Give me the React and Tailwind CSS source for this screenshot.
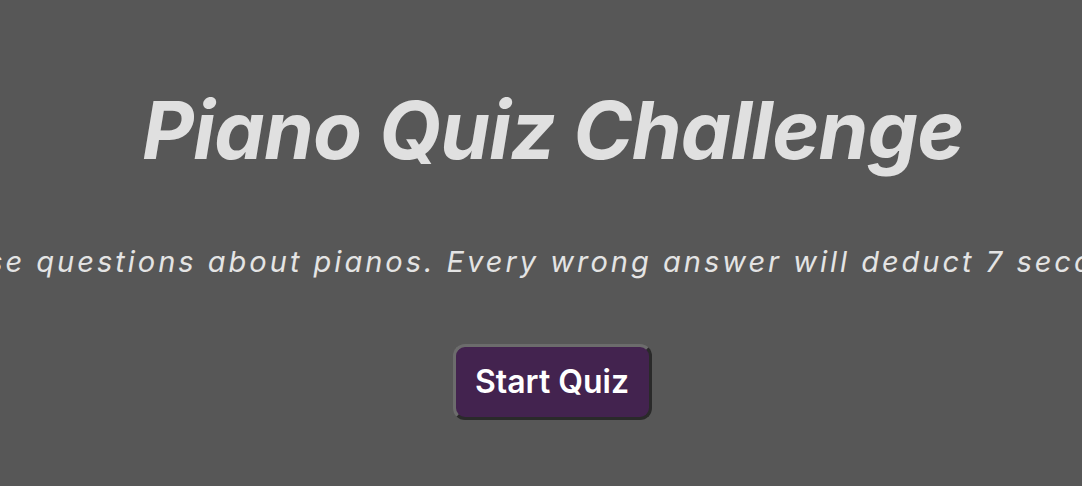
export default function App() {
  return (
    <div
      className="w-full h-[486px] bg-[#575757] overflow-hidden flex flex-col items-center"
      style={{ fontFamily: "Inter, 'Noto Sans', sans-serif" }}
    >
      <h1 className="mt-[86px] ml-[24px] text-[80px] leading-[88px] font-bold italic text-[#e0e0e0] tracking-[-0.01em] whitespace-nowrap">
        Piano Quiz Challenge
      </h1>
      <div className="w-full flex justify-center mt-[68px]">
        <p className="whitespace-nowrap text-[29px] leading-[40px] italic font-normal text-[#e4e4e4] tracking-[3px] shrink-0">
          Try to answer these questions about pianos. Every wrong answer will deduct 7 seconds off the clock.
        </p>
      </div>
      <button className="mt-[62px] ml-[22px] w-[199px] h-[76px] rounded-[12px] bg-[#43234f] border-[3px] border-t-[#6c6c6c] border-l-[#6c6c6c] border-b-[#2a2a2a] border-r-[#2a2a2a] text-white text-[32px] font-semibold">
        Start Quiz
      </button>
    </div>
  );
}
